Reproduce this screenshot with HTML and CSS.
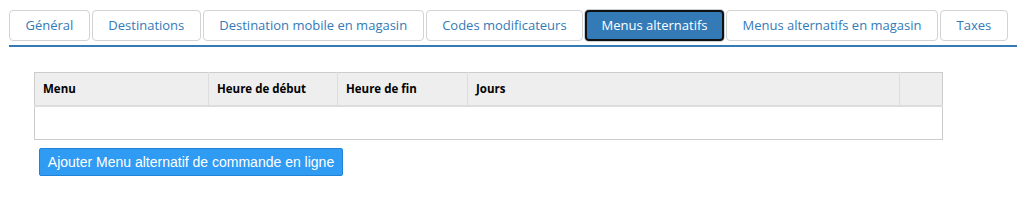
FILE: index.html
```html
<!DOCTYPE html>
<html>
<head>
  <title>Menus alternatifs</title>
  <meta name="viewport" content="width=device-width, initial-scale=1.0">
  <link rel="stylesheet" href="styles.css">
</head>
<body>
  <ul class="tabs">
    <li class="tab">Général</li>
    <li class="tab">Destinations</li>
    <li class="tab">Destination mobile en magasin</li>
    <li class="tab">Codes modificateurs</li>
    <li class="tab active">Menus alternatifs</li>
    <li class="tab">Menus alternatifs en magasin</li>
    <li class="tab">Taxes</li>
  </ul>

  <div class="panel">
    <table class="grid">
      <thead>
        <tr>
          <th class="col-menu">Menu</th>
          <th class="col-start">Heure de début</th>
          <th class="col-end">Heure de fin</th>
          <th class="col-days">Jours</th>
          <th class="col-actions"></th>
        </tr>
      </thead>
      <tbody>
        <tr class="empty-row"><td colspan="5"></td></tr>
      </tbody>
    </table>
    <button class="add-button">Ajouter Menu alternatif de commande en ligne</button>
  </div>
</body>
</html>
```

FILE: styles.css
```css
body {
  margin: 0;
  font-family: "Open Sans", "Noto Sans", sans-serif;
  color: #333;
  background: #fff;
}
.tabs {
  list-style: none;
  display: flex;
  gap: 2px;
  margin: 10px 0 0 9px;
  padding: 0 0 4px 0;
  border-bottom: 2px solid #337ab7;
}
.tab {
  height: 29px;
  line-height: 29px;
  padding: 0 15.5px;
  border: 1px solid #d3d3d3;
  border-radius: 4px;
  font-size: 13px;
  color: #337ab7;
  white-space: nowrap;
}
.tab.active {
  background-color: #337ab7;
  color: #fff;
  border: 2px solid #111;
  line-height: 27px;
  height: 27px;
  padding: 0 14.5px;
  box-shadow: 0 0 0 1px #c8d2dc;
}
.panel {
  margin: 25px 0 0 34px;
}
.grid {
  width: 909px;
  table-layout: fixed;
  border-collapse: collapse;
  border: 1px solid #ccc;
}
.grid th {
  box-sizing: border-box;
  height: 33px;
  padding: 0 8px;
  background-color: #eee;
  border-right: 1px solid #ddd;
  border-bottom: 2px solid #ddd;
  text-align: left;
  font-size: 11.5px;
  font-weight: bold;
  color: #000;
}
.grid th:last-child {
  border-right: none;
}
.col-menu { width: 174px; }
.col-start { width: 129px; }
.col-end { width: 130px; }
.col-days { width: 432px; }
.empty-row td {
  height: 32px;
  padding: 0;
}
.add-button {
  display: block;
  margin: 8px 0 0 5px;
  width: 304px;
  height: 28px;
  padding: 0;
  background-color: #2f9bf2;
  border: 1px solid #1f84d8;
  border-radius: 2px;
  color: #fff;
  font-family: "Liberation Sans", Arial, sans-serif;
  font-size: 14px;
}
```
